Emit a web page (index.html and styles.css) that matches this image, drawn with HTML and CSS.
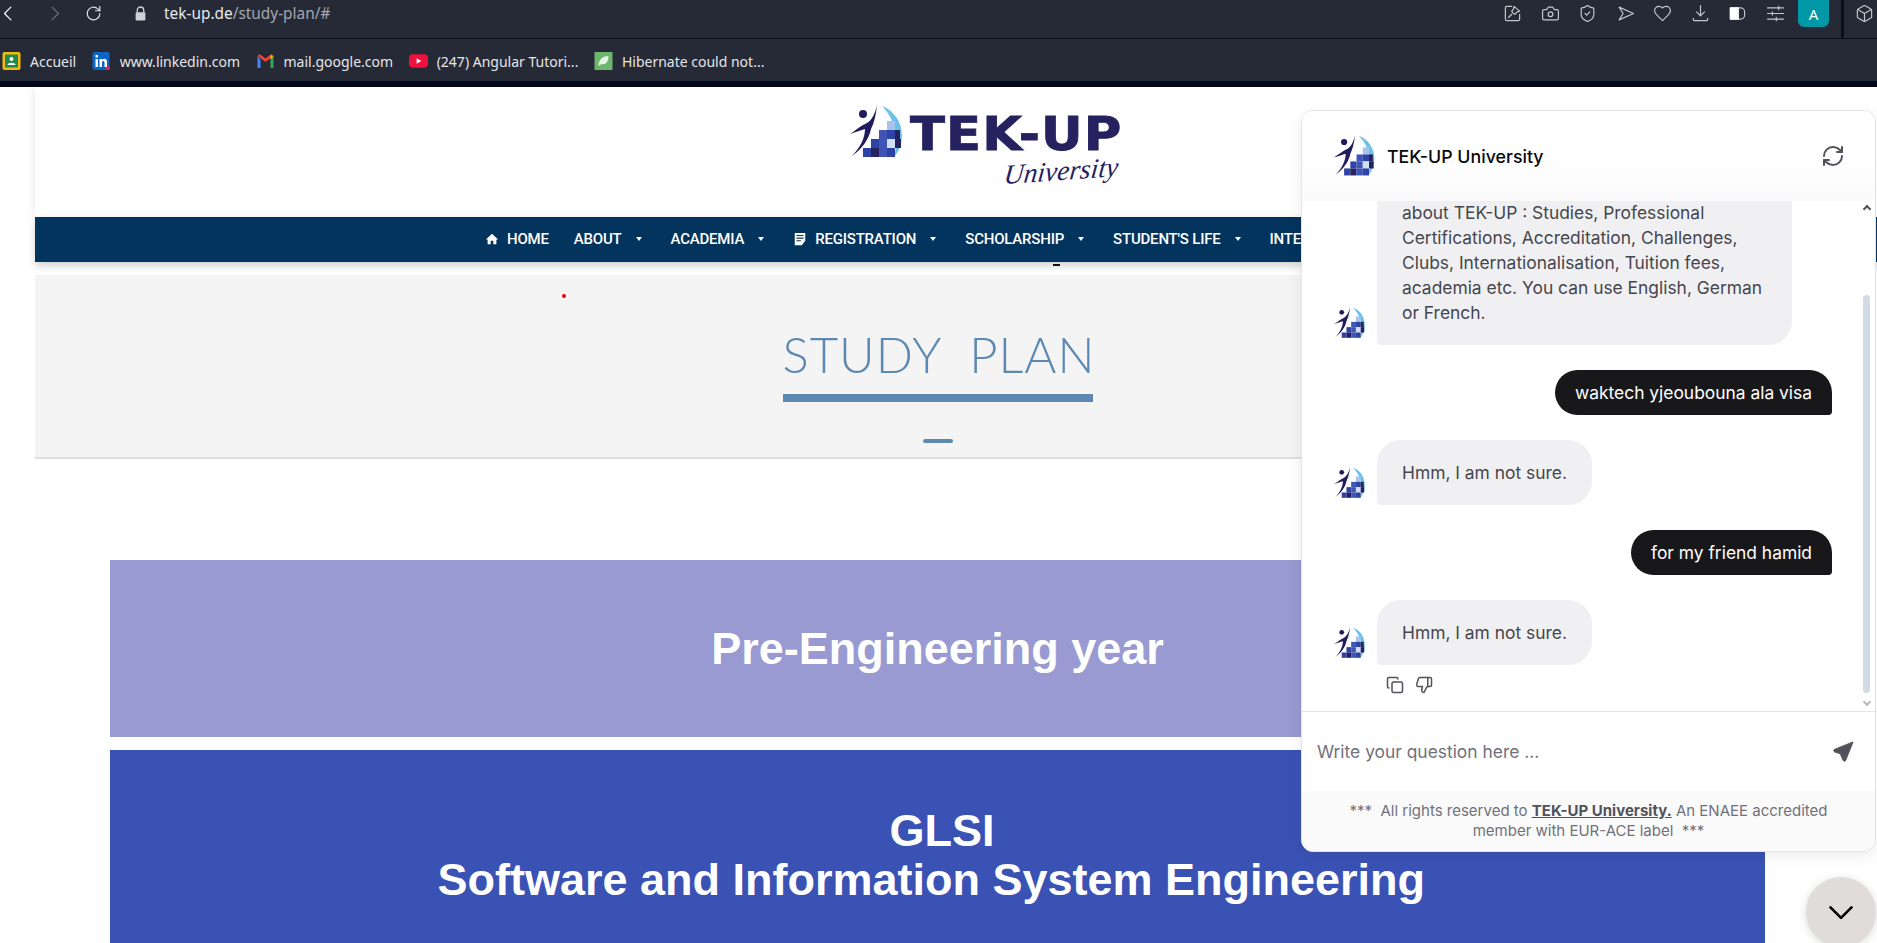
FILE: index.html
```html
<!DOCTYPE html>
<html lang="en">
<head>
    <meta charset="UTF-8">
    <title>Study Plan - TEK-UP</title>
    <link rel="stylesheet" href="styles.css">
</head>
<body>
    <svg class="defs" width="0" height="0">
        <symbol id="tekup-mark" viewBox="0 0 54 54">
            <path d="M32 1C46 6 55 22 51 38C50 44 47 49 43 53C48 42 50 20 32 1Z" fill="#6cc0ea"/>
            <rect x="37" y="16" width="8" height="9" fill="#a9c4ea"/>
            <rect x="29" y="25" width="8" height="9" fill="#3f55b5"/>
            <rect x="37" y="25" width="8" height="9" fill="#2f42a8"/>
            <rect x="45" y="25" width="5" height="9" fill="#26215f"/>
            <rect x="21" y="34" width="8" height="9" fill="#2f42a8"/>
            <rect x="29" y="34" width="8" height="9" fill="#3f55b5"/>
            <rect x="37" y="34" width="8" height="9" fill="#cfe0f5"/>
            <rect x="45" y="34" width="6" height="9" fill="#26215f"/>
            <rect x="13" y="43" width="8" height="9" fill="#2f42a8"/>
            <rect x="21" y="43" width="8" height="9" fill="#26215f"/>
            <rect x="29" y="43" width="8" height="9" fill="#3f55b5"/>
            <rect x="37" y="43" width="8" height="9" fill="#2f42a8"/>
            <circle cx="13" cy="9" r="4" fill="#1f1b5c"/>
            <path d="M27 0C25 9 22 15 17 18C12 20 6 25 0 29C6 27 11 25 15 24C15 32 11 42 2 51C12 44 19 34 21 24C24 18 26 10 27 0Z" fill="#1f1b5c"/>
        </symbol>
    </svg>

    <div class="toolbar">
        <div class="toolbar-left">
            <svg class="tb-icon back" viewBox="0 0 24 24"><path d="m15 4-8 8 8 8"/></svg>
            <svg class="tb-icon forward" viewBox="0 0 24 24"><path d="m9 4 8 8-8 8"/></svg>
            <svg class="tb-icon reload" viewBox="0 0 24 24"><path d="M20 12a8 8 0 1 1-2.500-5.800L20 8.500"/><path d="M20 3v5.500h-5.500"/></svg>
            <svg class="lock" viewBox="0 0 16 18"><path d="M4 8V5a4 4 0 0 1 8 0v3" fill="none" stroke="#cfd1d6" stroke-width="1.600"/><rect x="2" y="7.500" width="12" height="10" rx="1.500" fill="#cfd1d6"/></svg>
            <span class="url">tek-up.de<span class="url-path">/study-plan/#</span></span>
        </div>
        <div class="toolbar-right">
            <svg class="tb-icon" viewBox="0 0 24 24"><path d="M11 3H5a2 2 0 0 0-2 2v14a2 2 0 0 0 2 2h14a2 2 0 0 0 2-2v-6"/><path d="m14 3 7 6-3 1-3 3-2-1-2-3 2-2zM11 13l-4 4"/></svg>
            <svg class="tb-icon" viewBox="0 0 24 24"><path d="M14.500 4h-5L7 7H4a2 2 0 0 0-2 2v9a2 2 0 0 0 2 2h16a2 2 0 0 0 2-2V9a2 2 0 0 0-2-2h-3z"/><circle cx="12" cy="13" r="3"/></svg>
            <svg class="tb-icon" viewBox="0 0 24 24"><path d="M20 13c0 5-3.500 7.500-7.660 8.950a1 1 0 0 1-.67-.01C7.500 20.500 4 18 4 13V6a1 1 0 0 1 1-1c2 0 4.500-1.200 6.240-2.720a1.170 1.170 0 0 1 1.520 0C14.510 3.810 17 5 19 5a1 1 0 0 1 1 1z"/><path d="m9 12 2 2 4-4"/></svg>
            <svg class="tb-icon" viewBox="0 0 24 24"><path d="M4 4l18 8-18 8 5-8z"/></svg>
            <svg class="tb-icon" viewBox="0 0 24 24"><path d="M19 14c1.490-1.460 3-3.210 3-5.500A5.500 5.500 0 0 0 16.500 3c-1.760 0-3 .5-4.500 2-1.500-1.500-2.740-2-4.500-2A5.500 5.500 0 0 0 2 8.500c0 2.300 1.500 4.050 3 5.500l7 7z"/></svg>
            <svg class="tb-icon" viewBox="0 0 24 24"><path d="M12 2v13M7 10l5 5 5-5M3 18v2a1 1 0 0 0 1 1h16a1 1 0 0 0 1-1v-2"/></svg>
            <svg class="tb-icon" viewBox="0 0 24 24"><path d="M3 5h13a5 5 0 0 1 5 5v4a5 5 0 0 1-5 5H3z"/><path d="M3 5h10v14H3z" class="solid"/></svg>
            <svg class="tb-icon" viewBox="0 0 24 24"><path d="M2 5h20M2 12h20M2 19h20M16 3v4M8 10v4M13 17v4"/></svg>
            <span class="avatar">A</span>
            <span class="tb-corner"></span>
            <svg class="tb-icon cube" viewBox="0 0 24 24"><path d="M21 8a2 2 0 0 0-1-1.730l-7-4a2 2 0 0 0-2 0l-7 4A2 2 0 0 0 3 8v8a2 2 0 0 0 1 1.730l7 4a2 2 0 0 0 2 0l7-4A2 2 0 0 0 21 16z"/><path d="m3.300 7 8.700 5 8.700-5M12 22V12"/></svg>
        </div>
    </div>

    <div class="bookmarks">
        <a class="bookmark">
            <svg viewBox="0 0 18 18"><rect width="18" height="18" rx="2" fill="#f2b90f"/><rect x="2.500" y="2.500" width="13" height="13" fill="#1f8a4c"/><circle cx="9" cy="7" r="2" fill="#fff"/><path d="M5 13c0-3 8-3 8 0z" fill="#fff"/></svg>
            Accueil
        </a>
        <a class="bookmark">
            <svg viewBox="0 0 18 18"><rect width="17" height="18" rx="2" fill="#0a66c2"/><path d="M3 7h2.500v8H3zM3 3h2.500v2.500H3zM7 7h2.500v1c1.500-2 5-1.500 5 2v5H12v-4.500c0-2-2.500-2-2.500 0V15H7z" fill="#fff"/><circle cx="15.500" cy="16" r="2" fill="#e0245e"/></svg>
            www.linkedin.com
        </a>
        <a class="bookmark">
            <svg viewBox="0 0 18 18"><path d="M1 4v12h3V8z" fill="#4285f4"/><path d="M17 4v12h-3V8z" fill="#34a853"/><path d="M1 4l8 6 8-6-2-2-6 4.500L3 2z" fill="#ea4335"/><path d="M14 8V3.200L17 4z" fill="#fbbc04"/></svg>
            mail.google.com
        </a>
        <a class="bookmark">
            <svg viewBox="0 0 20 18"><rect y="2" width="20" height="14" rx="4" fill="#f0103c"/><path d="M8 6l5 3-5 3z" fill="#fff"/></svg>
            (247) Angular Tutori...
        </a>
        <a class="bookmark">
            <svg viewBox="0 0 18 18"><rect width="18" height="18" fill="#6db56d"/><path d="M4 14C4 8 8 4 14 4c0 6-3 9-7 8z" fill="#e9f5e9"/></svg>
            Hibernate could not...
        </a>
    </div>
    <div class="darkline"></div>

    <div class="page">
        <div class="site">
            <header class="site-header">
                <div class="logo">
                    <svg class="logo-mark"><use href="#tekup-mark"/></svg>
                    <div class="logo-text">
                        <span class="logo-name">TEK-UP</span>
                        <span class="logo-sub">University</span>
                    </div>
                </div>
            </header>
            <nav class="main-nav">
                <a class="nav-item">
                    <svg class="nav-icon" viewBox="0 0 16 16"><path d="M8 2 1 8.500h2V14h3.500v-4h3v4H13V8.500h2z" fill="#fff"/></svg>
                    HOME
                </a>
                <a class="nav-item has-caret">ABOUT</a>
                <a class="nav-item has-caret">ACADEMIA</a>
                <a class="nav-item has-caret">
                    <svg class="nav-icon" viewBox="0 0 16 16"><path d="M2 1h12v9l-4 5H2z" fill="#fff"/><path d="M4 4h8M4 7h8M4 10h5" stroke="#03345d" stroke-width="1.300"/></svg>
                    REGISTRATION
                </a>
                <a class="nav-item has-caret">SCHOLARSHIP</a>
                <a class="nav-item has-caret">STUDENT'S LIFE</a>
                <a class="nav-item has-caret">INTERNATIONAL</a>
            </nav>
            <section class="banner">
                <span class="red-dot"></span>
                <h1 class="banner-title">STUDY&nbsp; PLAN</h1>
                <div class="banner-dash"></div>
            </section>
            <div class="year-card card-light">Pre-Engineering year</div>
            <div class="year-card card-blue">&thinsp;GLSI<br>Software and Information System Engineering&nbsp;</div>
        </div>

        <aside class="chat">
            <div class="chat-header">
                <svg class="chat-logo"><use href="#tekup-mark"/></svg>
                <span class="chat-title">TEK-UP University</span>
                <svg class="chat-refresh" viewBox="0 0 24 24"><path d="M3 12a9 9 0 0 1 9-9 9.750 9.750 0 0 1 6.740 2.740L21 8"/><path d="M21 3v5h-5"/><path d="M21 12a9 9 0 0 1-9 9 9.750 9.750 0 0 1-6.740-2.740L3 16"/><path d="M8 16H3v5"/></svg>
            </div>
            <div class="chat-messages">
                <div class="msg-bot">
                    <svg class="msg-avatar"><use href="#tekup-mark"/></svg>
                    <div class="bubble-bot wide">about TEK-UP : Studies, Professional Certifications, Accreditation, Challenges, Clubs, Internationalisation, Tuition fees, academia etc. You can use English, German or French.</div>
                </div>
                <div class="bubble-user">waktech yjeoubouna ala visa</div>
                <div class="msg-bot">
                    <svg class="msg-avatar"><use href="#tekup-mark"/></svg>
                    <div class="bubble-bot">Hmm, I am not sure.</div>
                </div>
                <div class="bubble-user">for my friend hamid</div>
                <div class="msg-bot">
                    <svg class="msg-avatar"><use href="#tekup-mark"/></svg>
                    <div class="bubble-bot">Hmm, I am not sure.</div>
                </div>
                <div class="msg-actions">
                    <svg viewBox="0 0 24 24"><rect x="8" y="8" width="14" height="14" rx="2"/><path d="M4 16c-1.100 0-2-.9-2-2V4c0-1.100.9-2 2-2h10c1.100 0 2 .9 2 2"/></svg>
                    <svg viewBox="0 0 24 24"><path d="M17 14V2"/><path d="M9 18.120 10 14H4.170a2 2 0 0 1-1.920-2.560l2.330-8A2 2 0 0 1 6.500 2H20a2 2 0 0 1 2 2v8a2 2 0 0 1-2 2h-2.760a2 2 0 0 0-1.790 1.110L12 22a3.130 3.130 0 0 1-3-3.880z"/></svg>
                </div>
            </div>
            <div class="chat-input">
                <input type="text" placeholder="Write your question here ...">
                <svg class="chat-send" viewBox="0 0 24 24"><path d="M23 1 3 9c-1.500.7-1.500 2 0 3l6 2 3 7c1 1.500 2.500 1.500 3 0z"/></svg>
            </div>
            <div class="chat-footer">***&nbsp; All rights reserved to <a class="footer-link">TEK-UP University.</a> An ENAEE accredited member with EUR-ACE label&nbsp; ***</div>
            <span class="scroll-up"></span>
            <span class="scroll-thumb"></span>
            <span class="scroll-down"></span>
        </aside>
        <button class="chat-fab">
            <svg viewBox="0 0 24 24"><path d="m3 8 9 9 9-9"/></svg>
        </button>
    </div>
</body>
</html>
```

FILE: styles.css
```css
* {
    box-sizing: border-box;
}

html,
body {
    margin: 0;
    height: 100%;
    overflow: hidden;
}

body {
    display: flex;
    flex-direction: column;
    background-color: #fff;
    font-family: "Liberation Sans", Arial, sans-serif;
}

.defs {
    position: absolute;
}

/* browser chrome */
.toolbar {
    height: 39px;
    flex: none;
    display: flex;
    justify-content: space-between;
    padding-bottom: 12px;
    background-color: #262a36;
    border-bottom: 1px solid #0b0d18;
}

.toolbar-left,
.toolbar-right {
    display: flex;
    align-items: center;
}

.tb-icon {
    width: 19px;
    height: 19px;
    flex: none;
    fill: none;
    stroke: #c4c6cb;
    stroke-width: 1.5;
    stroke-linecap: round;
    stroke-linejoin: round;
}

.tb-icon .solid {
    fill: #fff;
    stroke: #fff;
}

.back {
    margin-left: -1px;
    stroke: #fff;
}

.forward {
    margin-left: 27px;
    stroke: #6d7078;
}

.reload {
    margin-left: 20px;
    stroke: #e2e3e6;
}

.lock {
    width: 13px;
    height: 15px;
    margin-left: 31px;
}

.url {
    margin-left: 17px;
    font-family: "Noto Sans", sans-serif;
    font-size: 15.400px;
    color: #e8e9eb;
}

.url-path {
    color: #a3a6ad;
}

.toolbar-right {
    gap: 18.500px;
    padding-right: 3px;
}

.avatar {
    width: 31px;
    height: 27px;
    margin-left: -5px;
    align-self: flex-start;
    display: flex;
    align-items: center;
    justify-content: center;
    background-color: #0097a7;
    border-radius: 0 0 6px 6px;
    font-family: "Noto Sans", sans-serif;
    font-size: 15px;
    color: #fff;
}

.tb-corner {
    width: 3px;
    height: 38px;
    margin: 0 -7.500px -12px -6.500px;
    align-self: flex-start;
    background-color: #0b0d18;
}

.bookmarks {
    height: 42px;
    flex: none;
    display: flex;
    align-items: center;
    gap: 15.500px;
    padding: 2px 0 0 2px;
    background-color: #262a36;
}

.bookmark {
    display: flex;
    align-items: center;
    gap: 9px;
    font-family: "Noto Sans", sans-serif;
    font-size: 14px;
    color: #e4e5e8;
}

.bookmark svg {
    width: 19px;
    height: 18px;
}

.darkline {
    height: 6px;
    flex: none;
    background-color: #05071a;
}

/* site */
.page {
    position: relative;
    flex: 1;
    overflow: hidden;
}

.site {
    padding-left: 35px;
}

.site-header {
    height: 130px;
    display: flex;
    align-items: flex-start;
    justify-content: center;
    padding: 18px 0 0 60px;
    box-shadow: 0 0 10px rgba(0, 0, 0, .1);
}

.logo {
    display: flex;
    align-items: flex-start;
    gap: 6px;
}

.logo-mark {
    width: 54px;
    height: 54px;
}

.logo-text {
    width: 212px;
    display: flex;
    flex-direction: column;
    align-items: flex-end;
    color: #26215f;
}

.logo-name {
    margin-top: 6px;
    transform: scaleX(1.115);
    transform-origin: left center;
    align-self: flex-start;
    font-family: "DejaVu Sans", sans-serif;
    font-weight: bold;
    font-size: 46px;
    line-height: 46px;
    letter-spacing: 1px;
    white-space: nowrap;
    -webkit-text-stroke: .8px #26215f;
}

.logo-sub {
    margin: -2px 3px 0 0;
    font-family: "Liberation Serif", serif;
    font-style: italic;
    font-size: 27.500px;
    line-height: 32px;
    transform: rotate(-4deg) skewX(-10deg);
}

.main-nav {
    position: relative;
    height: 45px;
    display: flex;
    align-items: center;
    padding: 0 0 2px 450px;
    background-color: #03345d;
    box-shadow: 0 4px 8px rgba(0, 0, 0, .18);
    overflow: hidden;
}

.nav-item {
    display: flex;
    align-items: center;
    gap: 8px;
    margin-right: 25px;
    font-family: Roboto, sans-serif;
    font-weight: 500;
    font-size: 15px;
    letter-spacing: -.2px;
    color: #fff;
    white-space: nowrap;
}

.nav-icon {
    width: 14px;
    height: 14px;
}

.has-caret {
    margin-right: 29px;
}

.has-caret::after {
    content: "";
    margin-left: 6px;
    border-top: 4px solid #fff;
    border-left: 3.500px solid transparent;
    border-right: 3.500px solid transparent;
}

.banner {
    position: relative;
    height: 184px;
    margin: 13px 37px 0 0;
    padding-top: 49px;
    display: flex;
    flex-direction: column;
    align-items: center;
    background-color: #f4f4f4;
    border-bottom: 2px solid #ddd;
}

/* stray mark just under the menu */
.banner::before {
    content: "";
    position: absolute;
    left: 1018px;
    top: -11px;
    width: 7px;
    height: 2px;
    background-color: #111;
}

.red-dot {
    position: absolute;
    left: 527px;
    top: 19px;
    width: 4px;
    height: 4px;
    border-radius: 50%;
    background-color: #e00;
}

.banner-title {
    width: 310px;
    margin: 0;
    padding-bottom: 10px;
    border-bottom: 8px solid #5c88b1;
    font-family: Lato, sans-serif;
    font-weight: 300;
    font-size: 49px;
    line-height: 60px;
    letter-spacing: 1px;
    text-align: center;
    color: #5c88b1;
    white-space: nowrap;
}

.banner-dash {
    width: 30px;
    height: 4px;
    margin-top: 37px;
    border-radius: 2px;
    background-color: #5c88b1;
}

.year-card {
    margin-right: 112px;
    margin-left: 75px;
    display: flex;
    flex-direction: column;
    justify-content: center;
    text-align: center;
    font-weight: bold;
    font-size: 45px;
    line-height: 49px;
    color: #fff;
}

.card-light {
    height: 177px;
    margin-top: 101px;
    background-color: #989ad1;
}

.card-blue {
    display: block;
    height: 260px;
    margin-top: 13px;
    padding-top: 56px;
    background-color: #3a52b4;
}

/* chat widget */
.chat {
    position: absolute;
    top: 23px;
    left: 1301px;
    width: 575px;
    height: 742px;
    display: flex;
    flex-direction: column;
    overflow: hidden;
    background-color: #fff;
    border: 1px solid #e4e4e7;
    border-radius: 12px;
    box-shadow: 0 4px 16px rgba(0, 0, 0, .08);
    font-family: Inter, sans-serif;
}

.chat-header {
    height: 90px;
    flex: none;
    display: flex;
    align-items: center;
    padding: 0 30px 0 32px;
    background: linear-gradient(#fff 50%, #fafafa);
    position: relative;
    z-index: 1;
}

.chat-logo {
    width: 42px;
    height: 42px;
    margin-right: 11px;
}

.chat-title {
    flex: 1;
    font-weight: 500;
    font-size: 17.800px;
    color: #09090b;
}

.chat-refresh {
    width: 24px;
    height: 24px;
    fill: none;
    stroke: #52525b;
    stroke-width: 2;
    stroke-linecap: round;
    stroke-linejoin: round;
}

.chat-messages {
    flex: 1;
    min-height: 0;
    display: flex;
    flex-direction: column;
    justify-content: flex-end;
    overflow: hidden;
    padding: 0 43px 16px 32px;
}

.msg-bot {
    display: flex;
    align-items: flex-end;
    flex: none;
    gap: 11px;
}

.msg-avatar {
    width: 32px;
    height: 32px;
    margin-bottom: 6px;
    flex: none;
}

.bubble-bot {
    padding: 20px 25px;
    flex: none;
    background-color: #f0f0f3;
    border-radius: 24px 24px 24px 4px;
    font-size: 17.400px;
    line-height: 25px;
    color: #46464d;
}

.bubble-bot.wide {
    width: 415px;
}

.bubble-user {
    align-self: flex-end;
    flex: none;
    margin: 25px 0;
    padding: 10px 20px;
    background-color: #18181b;
    border-radius: 24px 24px 4px 24px;
    font-size: 17.400px;
    line-height: 25px;
    color: #fff;
}

.msg-actions {
    display: flex;
    flex: none;
    gap: 11px;
    margin: 11px 0 1px 52px;
}

.msg-actions svg {
    width: 18px;
    height: 18px;
    fill: none;
    stroke: #52525b;
    stroke-width: 2;
    stroke-linecap: round;
    stroke-linejoin: round;
}

.chat-input {
    height: 80px;
    flex: none;
    display: flex;
    align-items: center;
    padding: 0 21px 0 15px;
    border-top: 1px solid #e4e4e7;
}

.chat-input input {
    flex: 1;
    padding: 0;
    border: 0;
    outline: 0;
    font-family: Inter, sans-serif;
    font-size: 17.400px;
}

.chat-input input::placeholder {
    color: #71717a;
}

.chat-send {
    width: 22px;
    height: 22px;
    fill: #52525b;
    stroke: #52525b;
    stroke-linejoin: round;
}

.chat-footer {
    height: 60px;
    flex: none;
    padding: 10px 35px 0;
    background-color: #fafafa;
    font-size: 15px;
    line-height: 20px;
    text-align: center;
    color: #71717a;
}

.footer-link {
    font-weight: 700;
    color: #52525b;
    text-decoration: underline;
}

.scroll-thumb {
    position: absolute;
    left: 561px;
    top: 184px;
    width: 7px;
    height: 398px;
    border-radius: 4px;
    background-color: #d1dbe5;
}

.scroll-up,
.scroll-down {
    position: absolute;
    left: 562px;
    width: 6px;
    height: 6px;
    border-left: 2px solid #555;
    border-top: 2px solid #555;
    transform: rotate(45deg);
}

.scroll-up {
    top: 95px;
}

.scroll-down {
    top: 588px;
    border-color: #bbb;
    transform: rotate(225deg);
}

.chat-fab {
    position: absolute;
    left: 1806px;
    top: 790px;
    width: 70px;
    height: 70px;
    padding: 0;
    display: flex;
    align-items: center;
    justify-content: center;
    border: 0;
    border-radius: 50%;
    background-color: #e0dcdc;
    box-shadow: 0 2px 10px rgba(0, 0, 0, .15);
}

.chat-fab svg {
    width: 28px;
    height: 28px;
    fill: none;
    stroke: #000;
    stroke-width: 2.300;
    stroke-linecap: round;
    stroke-linejoin: round;
}
```
